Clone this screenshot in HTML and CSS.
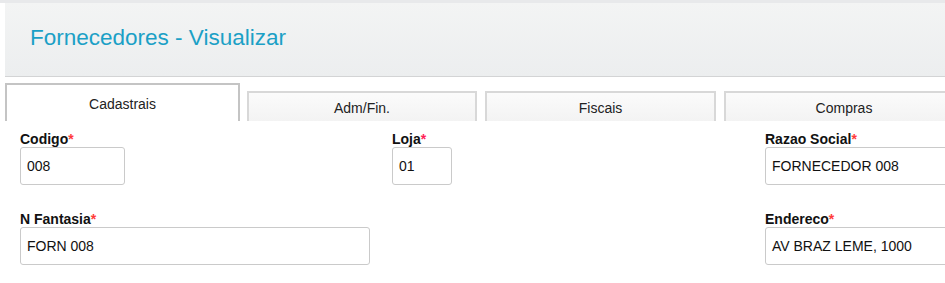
FILE: index.html
```html
<!DOCTYPE html>
<html lang="pt">
<head>
<meta charset="utf-8">
<title>Fornecedores - Visualizar</title>
<link rel="stylesheet" href="styles.css">
</head>
<body>
<div class="topstrip"></div>
<div class="page">
  <header class="header">
    <h1 class="title">Fornecedores - Visualizar</h1>
  </header>
  <nav class="tabs">
    <div class="tab tab-active">Cadastrais</div>
    <div class="tab">Adm/Fin.</div>
    <div class="tab">Fiscais</div>
    <div class="tab tab-wide">Compras</div>
  </nav>
</div>
<main class="form">
  <div class="field">
    <label class="label">Codigo<span class="req">*</span></label>
    <div class="input w-sm">008</div>
  </div>
  <div class="field">
    <label class="label">Loja<span class="req req-pink">*</span></label>
    <div class="input w-xs">01</div>
  </div>
  <div class="field">
    <label class="label">Razao Social<span class="req">*</span></label>
    <div class="input w-lg">FORNECEDOR 008</div>
  </div>
  <div class="field span2">
    <label class="label">N Fantasia<span class="req">*</span></label>
    <div class="input w-md">FORN 008</div>
  </div>
  <div class="field">
    <label class="label">Endereco<span class="req">*</span></label>
    <div class="input w-lg">AV BRAZ LEME, 1000</div>
  </div>
</main>
</body>
</html>
```
FILE: styles.css
```css
html, body {
  margin: 0;
  padding: 0;
  background: #ffffff;
  overflow: hidden;
  font-family: "Liberation Sans", Arial, sans-serif;
  color: #111;
}
.topstrip {
  height: 3px;
  background: #e8e9eb;
}
.page {
  padding-left: 5px;
}
.header {
  height: 73px;
  background: linear-gradient(#f3f4f4, #eceeef);
  border-bottom: 1px solid #d3d4d5;
  display: flex;
  align-items: center;
  padding-left: 25px;
}
.title {
  margin: 0;
  font-size: 22.5px;
  font-weight: normal;
  color: #1ba0c6;
  position: relative;
  top: -2px;
}
.tabs {
  display: flex;
  align-items: flex-end;
  height: 44px;
  white-space: nowrap;
}
.tab {
  box-sizing: border-box;
  flex: 0 0 auto;
  height: 30px;
  margin-left: 8px;
  width: 231px;
  border: 2px solid #d8d8d8;
  border-bottom: none;
  background: linear-gradient(#fbfbfb, #f3f3f3);
  font-size: 14px;
  line-height: 16px;
  color: #222;
  text-align: center;
  padding-top: 7px;
}
.tab:nth-child(2) { margin-left: 7px; width: 230px; }
.tab-active {
  margin-left: 0;
  width: 235px;
  height: 38px;
  background: #ffffff;
  border-color: #c4c4c4;
  padding-top: 11px;
}
.tab-wide { width: 240px; }
.form {
  display: grid;
  grid-template-columns: 372px 373px 1fr;
  padding: 10px 0 0 20px;
  row-gap: 26px;
}
.field {
  display: flex;
  flex-direction: column;
}
.span2 { grid-column: span 2; }
.label {
  font-size: 14px;
  font-weight: bold;
  line-height: 16px;
  height: 16px;
  color: #111;
}
.req {
  color: #ff3b3b;
  font-weight: bold;
}
.req-pink { color: #ff1f5a; }
.input {
  box-sizing: border-box;
  height: 38px;
  border: 1px solid #cacaca;
  border-radius: 3px;
  padding: 0 6px 0 6px;
  display: flex;
  align-items: center;
  font-size: 14px;
  color: #111;
  white-space: nowrap;
}
.w-sm { width: 105px; }
.w-xs { width: 60px; }
.w-md { width: 350px; }
.w-lg { width: 260px; }
```
